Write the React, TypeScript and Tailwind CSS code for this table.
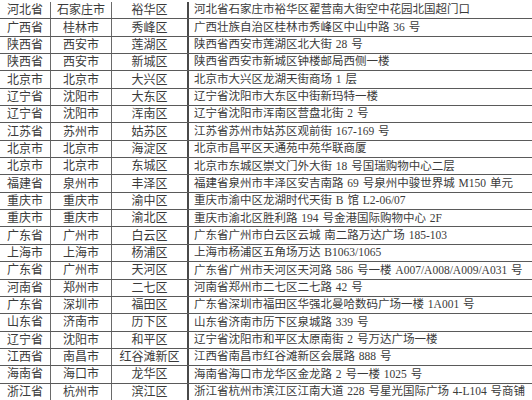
const rows: [string, string, string, string][] = [
  ["河北省", "石家庄市", "裕华区", "河北省石家庄市裕华区翟营南大街空中花园北国超门口"],
  ["广西省", "桂林市", "秀峰区", "广西壮族自治区桂林市秀峰区中山中路 36 号"],
  ["陕西省", "西安市", "莲湖区", "陕西省西安市莲湖区北大街 28 号"],
  ["陕西省", "西安市", "新城区", "陕西省西安市新城区钟楼邮局西侧一楼"],
  ["北京市", "北京市", "大兴区", "北京市大兴区龙湖天街商场 1 层"],
  ["辽宁省", "沈阳市", "大东区", "辽宁省沈阳市大东区中街新玛特一楼"],
  ["辽宁省", "沈阳市", "浑南区", "辽宁省沈阳市浑南区营盘北街 2 号"],
  ["江苏省", "苏州市", "姑苏区", "江苏省苏州市姑苏区观前街 167-169 号"],
  ["北京市", "北京市", "海淀区", "北京市昌平区天通苑中苑华联商厦"],
  ["北京市", "北京市", "东城区", "北京市东城区崇文门外大街 18 号国瑞购物中心二层"],
  ["福建省", "泉州市", "丰泽区", "福建省泉州市丰泽区安吉南路 69 号泉州中骏世界城 M150 单元"],
  ["重庆市", "重庆市", "渝中区", "重庆市渝中区龙湖时代天街 B 馆 L2-06/07"],
  ["重庆市", "重庆市", "渝北区", "重庆市渝北区胜利路 194 号金港国际购物中心 2F"],
  ["广东省", "广州市", "白云区", "广东省广州市白云区云城 南二路万达广场 185-103"],
  ["上海市", "上海市", "杨浦区", "上海市杨浦区五角场万达 B1063/1065"],
  ["广东省", "广州市", "天河区", "广东省广州市天河区天河路 586 号一楼 A007/A008/A009/A031 号"],
  ["河南省", "郑州市", "二七区", "河南省郑州市二七区二七路 42 号"],
  ["广东省", "深圳市", "福田区", "广东省深圳市福田区华强北曼哈数码广场一楼 1A001 号"],
  ["山东省", "济南市", "历下区", "山东省济南市历下区泉城路 339 号"],
  ["辽宁省", "沈阳市", "和平区", "辽宁省沈阳市和平区太原南街 2 号万达广场一楼"],
  ["江西省", "南昌市", "红谷滩新区", "江西省南昌市红谷滩新区会展路 888 号"],
  ["海南省", "海口市", "龙华区", "海南省海口市龙华区金龙路 2 号一楼 1025 号"],
  ["浙江省", "杭州市", "滨江区", "浙江省杭州市滨江区江南大道 228 号星光国际广场 4-L104 号商铺"],
]

export default function App() {
  return (
    <div className="w-[532px] h-[400px] overflow-hidden bg-white pt-[2px] text-[#3a3a3a] font-['Liberation_Serif','Noto_Sans_CJK_SC',serif]">
      {rows.map((r, i) => (
        <div
          key={i}
          className="grid grid-cols-[51px_61px_77px_1fr] h-[17.35px] border-b border-[#5a5a5a] items-center leading-none"
        >
          <div className="h-full flex items-center justify-center border-r border-[#6a6a6a] text-[12px]">{r[0]}</div>
          <div className="h-full flex items-center justify-center border-r border-[#6a6a6a] text-[12px]">{r[1]}</div>
          <div className="h-full flex items-center justify-center border-r-2 border-[#4a4a4a] text-[12px]">{r[2]}</div>
          <div className="h-full flex items-center pl-[5px] text-[11.5px] whitespace-nowrap [word-spacing:1px]">{r[3]}</div>
        </div>
      ))}
    </div>
  )
}
